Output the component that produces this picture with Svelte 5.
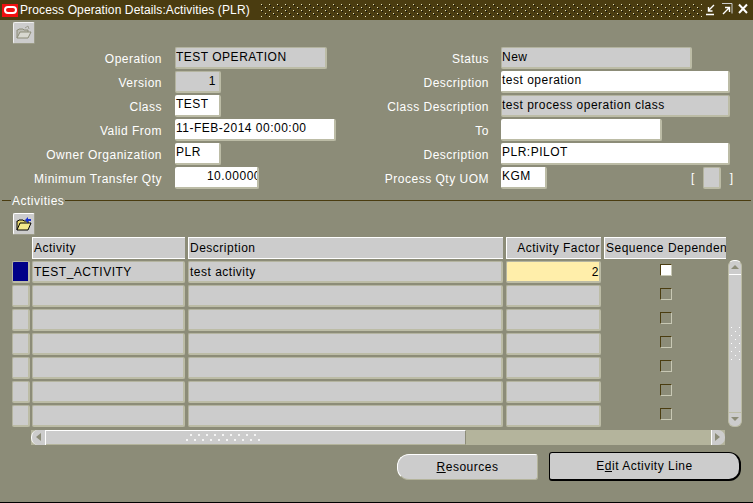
<script>
  // Oracle Forms window: header block on top, multi-row Activities block below.
  const left = [
    { label: 'Operation', value: 'TEST OPERATION', w: 152, kind: 'ro' },
    { label: 'Version', value: '1', w: 46, kind: 'ro', num: true },
    { label: 'Class', value: 'TEST', w: 46, kind: 'edit' },
    { label: 'Valid From', value: '11-FEB-2014 00:00:00', w: 161, kind: 'edit' },
    { label: 'Owner Organization', value: 'PLR', w: 46, kind: 'edit' },
    { label: 'Minimum Transfer Qty', value: '10.00000', w: 84, kind: 'edit', num: true, clipped: true }
  ];
  const right = [
    { label: 'Status', value: 'New', w: 191, kind: 'ro' },
    { label: 'Description', value: 'test operation', w: 229, kind: 'edit' },
    { label: 'Class Description', value: 'test process operation class', w: 229, kind: 'ro' },
    { label: 'To', value: '', w: 161, kind: 'edit' },
    { label: 'Description', value: 'PLR:PILOT', w: 229, kind: 'edit' },
    { label: 'Process Qty UOM', value: 'KGM', w: 46, kind: 'edit' }
  ];
  const rows = [
    { activity: 'TEST_ACTIVITY', description: 'test activity', factor: '2', current: true },
    ...Array.from({ length: 6 }, () => ({ activity: '', description: '', factor: '', current: false }))
  ];
</script>

<div class="window">
  <div class="titlebar">
    <span class="logo"><span class="ring"></span></span>
    <span class="title">Process Operation Details:Activities (PLR)</span>
    <svg class="dots" height="14" aria-hidden="true">
      <defs>
        <pattern id="tdots" width="8" height="6" patternUnits="userSpaceOnUse">
          <rect x="2" y="1" width="1" height="1" fill="#e8e4c0" />
          <rect x="3" y="2" width="1" height="1" fill="#111" />
          <rect x="6" y="4" width="1" height="1" fill="#e8e4c0" />
          <rect x="7" y="5" width="1" height="1" fill="#111" />
        </pattern>
      </defs>
      <rect width="100%" height="100%" fill="url(#tdots)" />
    </svg>
    <svg class="winbtns" width="46" height="14" viewBox="0 0 46 14" aria-hidden="true">
      <path d="M1 11.5h8M9 2L4 7M3.5 4v4h4" fill="none" stroke="#fff" stroke-width="1.4" />
      <path d="M17 0.5h10v10" fill="none" stroke="#ccc" stroke-width="1" />
      <path d="M18 11l6-6M20 4.5h4.5V9" fill="none" stroke="#fff" stroke-width="1.4" />
      <path d="M34 1.5l8 8.5M42 1.5l-8 8.5" fill="none" stroke="#fff" stroke-width="2" />
    </svg>
  </div>

  <div class="toolbar">
    <button class="tool" aria-label="Open">
      <svg width="18" height="16" viewBox="0 0 18 16">
        <path d="M2 13V5h1l1-1h4l1 1h4v2" fill="#bdbdb4" stroke="#8c8c78" />
        <path d="M2 13l3-6h11l-3 6z" fill="#d8d8d0" stroke="#8c8c78" />
        <path d="M10 3l3-2 1 3" fill="none" stroke="#9c9c90" />
      </svg>
    </button>
  </div>

  <div class="form">
    <div class="col">
      {#each left as f}
        <div class="frow">
          <span class="lbl">{f.label}</span>
          <span class="field {f.kind}" class:num={f.num} class:clipped={f.clipped} style="width:{f.w}px"><span>{f.value}</span></span>
        </div>
      {/each}
    </div>
    <div class="col rightcol">
      {#each right as f, i}
        <div class="frow">
          <span class="lbl">{f.label}</span>
          <span class="field {f.kind}" style="width:{f.w}px"><span>{f.value}</span></span>
          {#if i === 5}
            <span class="flex-tag"><i>[</i><span class="field ro tag"></span><i>]</i></span>
          {/if}
        </div>
      {/each}
    </div>
  </div>

  <div class="section"><span>Activities</span></div>

  <div class="toolbar second">
    <button class="tool" aria-label="Open activity">
      <svg width="18" height="16" viewBox="0 0 18 16">
        <path d="M2 14V5h1l1-1h4l1 1h4v2" fill="#e8d870" stroke="#000" />
        <path d="M2 14l3-7h11l-3 7z" fill="#f4e88c" stroke="#000" />
        <path d="M10 4l3-3v2h3v2h-3v2z" fill="#1830d0" />
      </svg>
    </button>
  </div>

  <div class="table">
    <div class="thead">
      <div class="th">Activity</div>
      <div class="th">Description</div>
      <div class="th end">Activity Factor</div>
      <div class="th">Sequence Dependen</div>
    </div>
    <div class="tbody">
      <div class="trows">
        {#each rows as r}
          <div class="trow">
            <span class="ind" class:current={r.current}></span>
            <span class="cell">{r.activity}</span>
            <span class="cell">{r.description}</span>
            <span class="cell factor" class:active={r.current}>{r.factor}</span>
            <span class="check"><span class="box" class:on={r.current}></span></span>
          </div>
        {/each}
      </div>
      <div class="vscroll">
        <span class="arrow up"></span>
        <span class="vtrack">
          <svg width="10" height="36" aria-hidden="true">
            <defs>
              <pattern id="vdots" width="8" height="8" patternUnits="userSpaceOnUse">
                <rect x="1" y="1" width="1" height="1" fill="#fff" />
                <rect x="5" y="5" width="1" height="1" fill="#fff" />
              </pattern>
            </defs>
            <rect width="100%" height="100%" fill="url(#vdots)" />
          </svg>
        </span>
        <span class="arrow down"></span>
      </div>
    </div>
    <div class="hscroll">
      <span class="harrow lefta"></span>
      <span class="hthumb">
        <svg width="76" height="8" aria-hidden="true">
          <defs>
            <pattern id="hdots" width="8" height="8" patternUnits="userSpaceOnUse">
              <rect x="4" y="0" width="2" height="2" fill="#f4f4f4" />
              <rect x="0" y="5" width="2" height="2" fill="#f4f4f4" />
            </pattern>
          </defs>
          <rect width="100%" height="100%" fill="url(#hdots)" />
        </svg>
      </span>
      <span class="hrest"></span>
      <span class="harrow righta"></span>
    </div>
  </div>

  <div class="actions">
    <button class="btn"><u>R</u>esources</button>
    <button class="btn primary">E<u>d</u>it Activity Line</button>
  </div>
</div>

<style>
  :global(body) {
    background: #8c8c78;
  }
  .window {
    width: 753px;
    height: 503px;
    box-sizing: border-box;
    overflow: hidden;
    background: #8c8c78;
    border-bottom: 1px solid #000;
    font-family: "Liberation Sans", Arial, sans-serif;
    font-size: 12px;
    letter-spacing: 0.5px;
    color: #000;
  }
  .titlebar {
    height: 20px;
    background: #4a3c10;
    display: flex;
    align-items: center;
    color: #fff;
  }
  .logo {
    width: 16px;
    height: 13px;
    margin-left: 2px;
    background: #f01010;
    display: flex;
    align-items: center;
    justify-content: center;
  }
  .ring {
    width: 9px;
    height: 4px;
    border: 2px solid #fff;
    border-radius: 4px;
  }
  .title {
    margin-left: 2px;
    white-space: nowrap;
    letter-spacing: 0.12px;
  }
  .dots {
    flex: 1;
    margin: 0 3px 0 9px;
    min-width: 0;
  }
  .winbtns {
    margin-right: 2px;
    flex: none;
  }
  .toolbar {
    height: 25px;
    padding-left: 13px;
    display: flex;
    align-items: center;
  }
  .tool {
    width: 22px;
    height: 22px;
    padding: 0;
    background: #cccccc;
    border: 1px solid;
    border-color: #f0f0f0 #9c9c88 #9c9c88 #f0f0f0;
    border-radius: 2px;
    display: flex;
    align-items: center;
    justify-content: center;
  }
  .form {
    margin-top: 1px;
    height: 144px;
    display: grid;
    grid-template-columns: 335px 1fr;
  }
  .col {
    display: grid;
    grid-auto-rows: 24px;
  }
  .frow {
    display: flex;
    align-items: center;
    height: 24px;
    position: relative;
  }
  .lbl {
    flex: none;
    padding-top: 1px;
    text-align: right;
    color: #fff;
    white-space: nowrap;
  }
  .col:first-child .lbl {
    width: 162px;
    margin-right: 13px;
  }
  .rightcol .lbl {
    width: 154px;
    margin-right: 12px;
  }
  .field {
    box-sizing: border-box;
    height: 22px;
    flex: none;
    display: flex;
    align-items: center;
    padding: 0 0 2px 1px;
    overflow: hidden;
    white-space: nowrap;
    border-right: 2px solid #bcbca6;
    border-bottom: 2px solid #bcbca6;
    border-radius: 2px;
    color: #000;
  }
  .field.ro {
    background: #cccccc;
    border-top: 1px solid #b4b4a0;
    border-left: 1px solid #b4b4a0;
    padding-left: 0;
  }
  .field.edit {
    background: #fff;
  }
  .field.num {
    justify-content: flex-end;
    padding-right: 3px;
  }
  .field.clipped {
    padding-right: 0;
  }
  .field.clipped span {
    margin-right: -4px;
  }
  .flex-tag {
    position: absolute;
    left: 356px;
    top: 0;
    display: flex;
    align-items: center;
    gap: 8px;
    color: #fff;
    height: 24px;
  }
  .flex-tag i {
    font-style: normal;
  }
  .field.tag {
    width: 18px;
    margin-right: 1px;
  }
  .section {
    margin-top: 3px;
    height: 16px;
    position: relative;
    display: flex;
    align-items: center;
  }
  .section::before {
    content: "";
    position: absolute;
    left: 2px;
    right: 2px;
    top: 7px;
    border-top: 1px solid #4a3c10;
  }
  .section span {
    position: relative;
    margin-left: 11px;
    padding: 0 1px;
    background: #8c8c78;
    color: #fff;
  }
  .second {
    height: 24px;
    margin-top: 3px;
  }
  .second .tool {
    border-color: #fff #9c9c88 #9c9c88 #fff;
  }
  .table {
    margin-top: 1px;
    padding-left: 12px;
  }
  .thead {
    display: grid;
    grid-template-columns: 153px 315px 95px 122px;
    gap: 3px;
    margin-left: 20px;
    width: 694px;
  }
  .th {
    box-sizing: border-box;
    height: 22px;
    background: #cccccc;
    border-top: 1px solid #fff;
    border-left: 1px solid #fff;
    border-bottom: 1px solid #fff;
    padding-left: 1px;
    line-height: 21px;
    white-space: nowrap;
    overflow: hidden;
  }
  .th.end {
    text-align: right;
    padding-right: 1px;
  }
  .tbody {
    display: flex;
    margin-top: 2px;
  }
  .trows {
    display: grid;
    grid-auto-rows: 24px;
    width: 714px;
  }
  .trow {
    display: grid;
    grid-template-columns: 17px 153px 315px 95px 122px;
    column-gap: 3px;
    align-items: start;
  }
  .ind,
  .cell {
    box-sizing: border-box;
    height: 22px;
    background: #cccccc;
    border-right: 2px solid #bcbca6;
    border-bottom: 2px solid #bcbca6;
    border-top: 1px solid #b4b4a0;
    border-left: 1px solid #b4b4a0;
    border-radius: 2px;
    padding-left: 1px;
    line-height: 20px;
    white-space: nowrap;
    overflow: hidden;
  }
  .ind {
    width: 18px;
  }
  .ind.current {
    background: #000088;
  }
  .factor {
    text-align: right;
  }
  .factor.active {
    background: #ffeeaa;
  }
  .check {
    display: flex;
    justify-content: center;
    height: 22px;
    padding: 3px 0 0 1px;
    box-sizing: border-box;
  }
  .box {
    box-sizing: border-box;
    width: 12px;
    height: 12px;
    border: 1px solid;
    border-color: #4a3c10 #c8c8b4 #c8c8b4 #4a3c10;
  }
  .box.on {
    background: #fff;
  }
  .vscroll {
    box-sizing: border-box;
    width: 14px;
    height: 167px;
    margin-left: 2px;
    margin-top: -1px;
    display: flex;
    flex-direction: column;
    background: #cccccc;
    border: 1px solid #bcbca6;
    border-top-color: #fff;
    border-radius: 6px;
    overflow: hidden;
  }
  .arrow {
    height: 13px;
    flex: none;
    position: relative;
  }
  .arrow.up {
    border-bottom: 1px solid #fff;
  }
  .arrow.down {
    border-top: 1px solid #bcbca6;
  }
  .arrow::after {
    content: "";
    position: absolute;
    left: 2px;
    border-left: 4px solid transparent;
    border-right: 4px solid transparent;
  }
  .arrow.up::after {
    top: 4px;
    border-bottom: 4px solid #8c8c78;
  }
  .arrow.down::after {
    top: 4px;
    border-top: 4px solid #8c8c78;
  }
  .vtrack {
    flex: 1;
    display: flex;
    align-items: center;
    justify-content: center;
  }
  .hscroll {
    display: flex;
    height: 15px;
    width: 694px;
    margin-left: 19px;
    margin-top: 1px;
    background: #b4b49c;
  }
  .harrow {
    width: 15px;
    flex: none;
    background: #cccccc;
    position: relative;
    box-sizing: border-box;
  }
  .harrow::after {
    content: "";
    position: absolute;
    top: 3px;
    border-top: 4px solid transparent;
    border-bottom: 4px solid transparent;
  }
  .lefta {
    border-radius: 7px 0 0 7px;
    border-left: 1px solid #fff;
    border-right: 1px solid #fff;
  }
  .lefta::after {
    left: 4px;
    border-right: 5px solid #8c8c78;
  }
  .righta {
    border-radius: 0 7px 7px 0;
    border-left: 1px solid #fff;
    width: 14px;
  }
  .righta::after {
    left: 3px;
    border-left: 5px solid #8c8c78;
  }
  .hthumb {
    width: 420px;
    flex: none;
    box-sizing: border-box;
    background: #cccccc;
    border-top: 1px solid #fff;
    border-right: 1px solid #8c8c78;
    border-bottom: 1px solid #b4b49c;
    display: flex;
    align-items: center;
    padding-left: 140px;
  }
  .hrest {
    flex: 1;
  }
  .actions {
    display: flex;
    justify-content: flex-end;
    align-items: center;
    gap: 11px;
    margin-top: 7px;
    padding-right: 12px;
  }
  .btn {
    box-sizing: border-box;
    height: 26px;
    width: 141px;
    padding: 0;
    background: #cccccc;
    border: 1px solid;
    border-color: #fff #b4b49c #b4b49c #fff;
    border-radius: 12px 3px 3px 12px;
    font: inherit;
    letter-spacing: inherit;
    color: #000;
  }
  .btn.primary {
    width: 192px;
    height: 29px;
    border: 1px solid #000;
    border-right-width: 2px;
    border-bottom-width: 2px;
    border-radius: 3px 12px 12px 3px;
  }
</style>
